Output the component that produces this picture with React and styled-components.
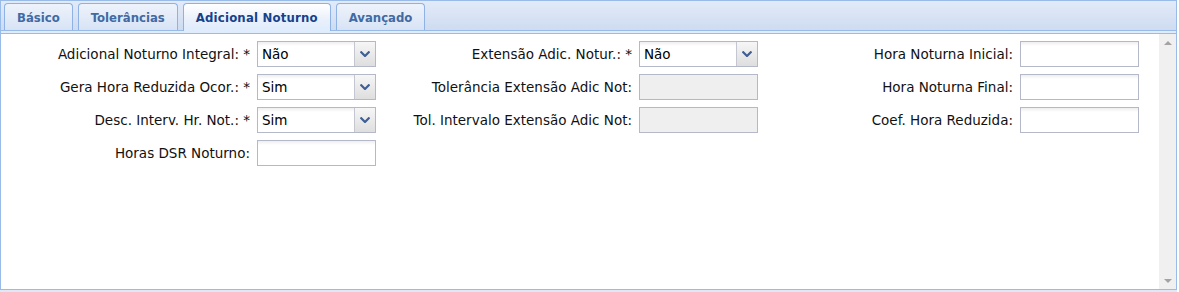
import React from 'react';
import styled, { createGlobalStyle } from 'styled-components';

const GlobalStyle = createGlobalStyle`
  html, body {
    margin: 0;
    padding: 0;
    background: #fff;
  }
  body {
    font-family: "DejaVu Sans", Tahoma, sans-serif;
    font-size: 13.5px;
  }
`

const Page = styled.div`
  width: 1177px;
  height: 292px;
  background: #dfe8f6;
`

const Panel = styled.div`
  box-sizing: border-box;
  width: 1177px;
  height: 290px;
  border: 1px solid #99bbe8;
  display: flex;
  flex-direction: column;
  background: #fff;
`

const TabStrip = styled.div`
  height: 29px;
  flex-shrink: 0;
  display: flex;
  align-items: flex-end;
  gap: 5px;
  padding-left: 3px;
  background: linear-gradient(#e2eaf7, #cedcf1);
  position: relative;
  z-index: 1;
`

const Tab = styled.div`
  box-sizing: border-box;
  height: ${p => (p.$active ? '28px' : '27px')};
  margin-bottom: ${p => (p.$active ? '-1px' : '0')};
  padding: 0 12px;
  display: flex;
  align-items: center;
  padding-bottom: ${p => (p.$active ? '1px' : '0')};
  border: 1px solid #8db2e3;
  border-bottom: none;
  border-radius: 4px 4px 0 0;
  font-family: "DejaVu Sans Condensed", "DejaVu Sans", sans-serif;
  font-weight: bold;
  font-size: 13px;
  letter-spacing: ${p => (p.$active ? '0.2px' : '0')};
  color: ${p => (p.$active ? '#15428b' : '#416aa3')};
  background: ${p =>
    p.$active
      ? 'linear-gradient(#ffffff, #e9f0fb 60%, #deecfd)'
      : 'linear-gradient(#eef3fb, #d7e3f5)'};
  white-space: nowrap;
`

const Spacer = styled.div`
  height: 2px;
  flex-shrink: 0;
  border-top: 1px solid #99bbe8;
  border-bottom: 1px solid #99bbe8;
  background: #deecfd;
`

const Body = styled.div`
  flex: 1;
  display: flex;
  min-height: 0;
`

const Form = styled.div`
  flex: 1;
  display: grid;
  grid-template-columns: 242px 119px 249px 119px 248px 119px;
  grid-auto-rows: 26px;
  column-gap: 7px;
  row-gap: 7px;
  padding: 7px 0 0 7px;
  align-content: start;
`

const Label = styled.label`
  display: flex;
  align-items: center;
  justify-content: flex-end;
  color: #111;
  white-space: nowrap;
  grid-column: ${p => p.$col * 2 - 1};
`

const Field = styled.div`
  box-sizing: border-box;
  height: 26px;
  display: flex;
  align-items: stretch;
  border: 1px solid #b5b8c8;
  background: ${p =>
    p.$disabled ? '#efefef' : 'linear-gradient(#eeeeee, #ffffff 4px)'};
  grid-column: ${p => p.$col * 2};
`

const Value = styled.span`
  flex: 1;
  display: flex;
  align-items: center;
  padding-left: 4px;
  color: #000;
`

const Trigger = styled.span`
  width: 20px;
  display: flex;
  align-items: center;
  justify-content: center;
  border-left: 1px solid #c4c6d2;
  background: linear-gradient(#f6f6f6, #dedede);
`

const Scrollbar = styled.div`
  width: 17px;
  flex-shrink: 0;
  background: #f0f0f0;
  display: flex;
  flex-direction: column;
  justify-content: space-between;
  align-items: center;
  padding: 7px 0 6px;
`

const Arrow = styled.span`
  width: 0;
  height: 0;
  border-left: 4px solid transparent;
  border-right: 4px solid transparent;
  ${p =>
    p.$down
      ? 'border-top: 4px solid #a3a3a3;'
      : 'border-bottom: 4px solid #a3a3a3;'}
`

const Chevron = () => (
  <svg width="10" height="6" viewBox="0 0 10 6">
    <path d="M0.5 0.5 L5 5 L9.5 0.5" fill="none" stroke="#3f5f95" strokeWidth="2.2" />
  </svg>
)

const fields = [
  { col: 1, row: 1, label: 'Adicional Noturno Integral: *', value: 'Não', combo: true },
  { col: 1, row: 2, label: 'Gera Hora Reduzida Ocor.: *', value: 'Sim', combo: true },
  { col: 1, row: 3, label: 'Desc. Interv. Hr. Not.: *', value: 'Sim', combo: true },
  { col: 1, row: 4, label: 'Horas DSR Noturno:' },
  { col: 2, row: 1, label: 'Extensão Adic. Notur.: *', value: 'Não', combo: true },
  { col: 2, row: 2, label: 'Tolerância Extensão Adic Not:', disabled: true },
  { col: 2, row: 3, label: 'Tol. Intervalo Extensão Adic Not:', disabled: true },
  { col: 3, row: 1, label: 'Hora Noturna Inicial:' },
  { col: 3, row: 2, label: 'Hora Noturna Final:' },
  { col: 3, row: 3, label: 'Coef. Hora Reduzida:' },
]

const tabs = ['Básico', 'Tolerâncias', 'Adicional Noturno', 'Avançado']

export default function App() {
  return (
    <Page>
      <GlobalStyle />
      <Panel>
        <TabStrip>
          {tabs.map(t => (
            <Tab key={t} $active={t === 'Adicional Noturno'}>{t}</Tab>
          ))}
        </TabStrip>
        <Spacer />
        <Body>
          <Form>
            {fields.map(f => (
              <React.Fragment key={f.label}>
                <Label $col={f.col} style={{ gridRow: f.row }}>{f.label}</Label>
                <Field $col={f.col} $disabled={f.disabled} style={{ gridRow: f.row }}>
                  <Value>{f.value}</Value>
                  {f.combo && (
                    <Trigger>
                      <Chevron />
                    </Trigger>
                  )}
                </Field>
              </React.Fragment>
            ))}
          </Form>
          <Scrollbar>
            <Arrow />
            <Arrow $down />
          </Scrollbar>
        </Body>
      </Panel>
    </Page>
  );
}
